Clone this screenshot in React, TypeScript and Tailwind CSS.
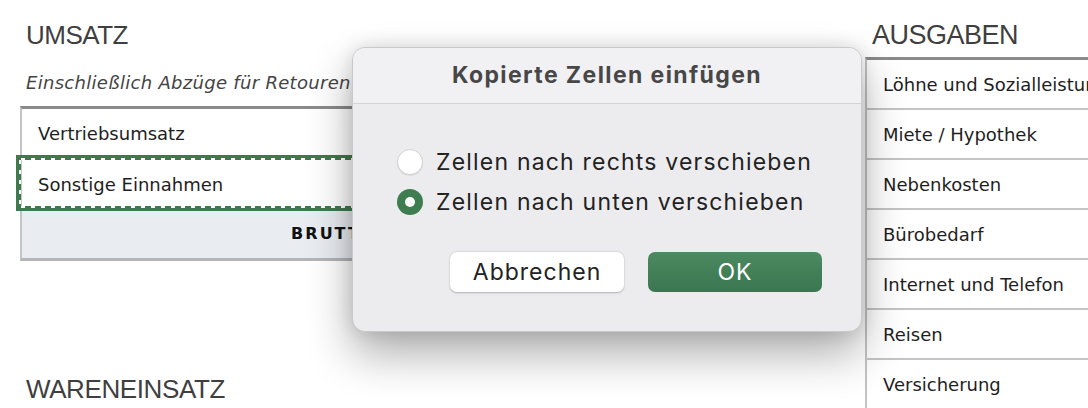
import React from 'react'

const heading = "font-['Liberation_Sans',sans-serif]"
const sheet = "font-['DejaVu_Sans',sans-serif]"

function Cell({ children, last }: { children: React.ReactNode; last?: boolean }) {
  return (
    <div className={`h-[50px] flex items-center pl-[16px] text-[18px] text-[#1e1e1e] ${sheet} ${last ? '' : 'border-b-2 border-[#c4c4c4]'}`}>
      {children}
    </div>
  )
}

export default function App() {
  const ausgaben = [
    'Löhne und Sozialleistungen',
    'Miete / Hypothek',
    'Nebenkosten',
    'Bürobedarf',
    'Internet und Telefon',
    'Reisen',
    'Versicherung',
  ]

  return (
    <div className={`relative w-[1088px] h-[408px] overflow-hidden bg-white ${heading}`}>
      <div className="flex">
        {/* left column */}
        <div className="ml-[20px] w-[806px] shrink-0">
          <h2 className="pt-[19px] pl-[6px] h-[66px] text-[26px] leading-[32px] text-[#3f3f3f] tracking-[-0.5px]">UMSATZ</h2>
          <p className={`h-[40px] pl-[6px] pt-[5px] text-[18px] italic text-[#444] leading-[24px] tracking-[0.3px] ${sheet}`}>Einschließlich Abzüge für Retouren</p>
          <div className="border-t-[3px] border-[#8a8a8a] border-l-2 border-l-[#c4c4c4] border-b-[3px] border-b-[#b5b5b5]">
            <Cell>Vertriebsumsatz</Cell>
            <div className="relative">
              <div className={`h-[50px] flex items-center pl-[16px] text-[18px] text-[#1e1e1e] ${sheet}`}>Sonstige Einnahmen</div>
              {/* copy marquee */}
              <div className="absolute left-[-6px] right-0 top-[-4px] bottom-[-2px] border-[5px] border-[#3f7a4f]">
                <div className="absolute left-0 right-0 top-[-2px] h-[2px] bg-[repeating-linear-gradient(90deg,#fff_0_4px,transparent_4px_10px)]"></div>
                <div className="absolute left-0 right-0 bottom-[-2px] h-[2px] bg-[repeating-linear-gradient(90deg,#fff_0_4px,transparent_4px_10px)]"></div>
                <div className="absolute top-0 bottom-0 left-[-2px] w-[2px] bg-[repeating-linear-gradient(180deg,#fff_0_4px,transparent_4px_10px)]"></div>
              </div>
            </div>
            <div className={`h-[49px] bg-[#e9ecf0] flex items-center justify-center text-[16px] font-bold tracking-[2px] text-[#111] ${sheet}`}>
              BRUTTOUMSATZ GESAMT
            </div>
          </div>
          <h2 className="pt-[112px] pl-[6px] h-[147px] text-[26px] leading-[32px] text-[#3f3f3f] tracking-[-0.4px]">WARENEINSATZ</h2>
          <div className="border-t-[3px] border-[#8a8a8a]"></div>
        </div>

        {/* right column */}
        <div className="ml-[39px] flex-1">
          <h2 className="pt-[19px] h-[57px] pl-[7px] text-[27px] leading-[32px] text-[#3f3f3f] tracking-[-0.5px]">AUSGABEN</h2>
          <div className="border-t-[3px] border-[#8a8a8a] border-l-2 border-l-[#c4c4c4] whitespace-nowrap">
            {ausgaben.map((a) => (
              <Cell key={a}>{a}</Cell>
            ))}
          </div>
        </div>
      </div>

      {/* dialog */}
      <div className="absolute left-[352px] top-[47px] w-[510px] h-[285px] rounded-[13px] bg-[#ececee] border border-[#c9c9cb] shadow-[0_22px_45px_rgba(0,0,0,0.32),0_0_18px_rgba(0,0,0,0.12)] font-['Inter',sans-serif] overflow-hidden">
        <div className="h-[56px] bg-[#f1f1f3] border-b border-[#d4d4d6] flex items-center justify-center">
          <span className="text-[23px] font-bold text-[#474747] tracking-[1.4px]">Kopierte Zellen einfügen</span>
        </div>
        <div className="pl-[44px] pt-[45px] flex flex-col gap-[14px]">
          <label className="flex items-center gap-[13px]">
            <span className="w-[26px] h-[26px] rounded-full bg-white border border-[#d2d2d2] shadow-[0_1px_1px_rgba(0,0,0,0.08)]"></span>
            <span className="text-[23px] text-[#222] leading-[26px] tracking-[1.2px]">Zellen nach rechts verschieben</span>
          </label>
          <label className="flex items-center gap-[13px]">
            <span className="w-[26px] h-[26px] rounded-full bg-[#3d7d4f] flex items-center justify-center">
              <span className="w-[10px] h-[10px] rounded-full bg-white"></span>
            </span>
            <span className="text-[23px] text-[#222] leading-[26px] tracking-[1.2px]">Zellen nach unten verschieben</span>
          </label>
        </div>
        <div className="flex justify-end gap-[24px] pr-[39px] pt-[37px]">
          <button className="w-[174px] h-[40px] rounded-[7px] bg-white shadow-[0_0.5px_2px_rgba(0,0,0,0.25)] text-[23px] text-[#222] tracking-[1px]">Abbrechen</button>
          <button className="w-[174px] h-[40px] rounded-[7px] bg-gradient-to-b from-[#4c8a60] to-[#3a7650] text-[23px] text-white tracking-[1px]">OK</button>
        </div>
      </div>
    </div>
  )
}
